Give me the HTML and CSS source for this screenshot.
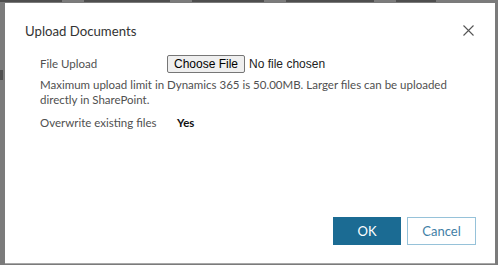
FILE: index.html
```html
<!DOCTYPE html>
<html lang="en">
<head>
    <meta charset="UTF-8">
    <title>Upload Documents</title>
    <link rel="stylesheet" href="styles.css">
</head>
<body>
    <div class="backdrop">
        <!-- page behind the modal, only the bottom of its nav shows -->
        <div class="page-strip">
            <i style="width: 62px"></i>
            <i style="width: 86px"></i>
            <i style="width: 72px"></i>
            <i style="width: 88px"></i>
            <i style="width: 40px"></i>
        </div>
        <i class="page-mark"></i>

        <div class="dialog">
            <div class="dialog-head">
                <h1>Upload Documents</h1>
                <button class="close-btn" aria-label="Close">
                    <svg width="11" height="11" viewBox="0 0 11 11">
                        <path d="M0.5 0.5 L10.5 10.5 M10.5 0.5 L0.5 10.5" stroke="#555" stroke-width="1.1" fill="none"/>
                    </svg>
                </button>
            </div>

            <div class="dialog-body">
                <div class="field">
                    <span class="label">File Upload</span>
                    <div class="file-picker">
                        <button class="choose-btn">Choose File</button>
                        <span class="file-name">No file chosen</span>
                    </div>
                </div>
                <p class="hint">Maximum upload limit in Dynamics 365 is 50.00MB. Larger files can be uploaded directly in SharePoint.</p>
                <div class="field">
                    <span class="label">Overwrite existing files</span>
                    <span class="value">Yes</span>
                </div>
            </div>

            <div class="dialog-foot">
                <button class="btn btn-primary">OK</button>
                <button class="btn btn-secondary">Cancel</button>
            </div>
        </div>
    </div>
</body>
</html>
```

FILE: styles.css
```css
body {
    margin: 0;
    font-family: Lato, "Open Sans", sans-serif;
    background: #7b7b7b;
}

.backdrop {
    width: 498px;
    height: 265px;
    overflow: hidden;
    position: relative;
    background: #7b7b7b;
}

.page-strip {
    position: absolute;
    top: 0;
    left: 0;
    display: flex;
    gap: 22px;
}

.page-strip i {
    height: 2px;
    background: #3c3c3c;
    opacity: 0.7;
}

.page-mark {
    position: absolute;
    top: 70px;
    left: 0;
    width: 3px;
    height: 10px;
    background: #333;
    opacity: 0.6;
}

.dialog {
    position: absolute;
    top: 3px;
    left: 5px;
    width: 490px;
    height: 260px;
    background: #fff;
    display: flex;
    flex-direction: column;
    box-shadow: 0 1px 0 #a8a8a8;
}

.dialog-head {
    display: flex;
    justify-content: space-between;
    align-items: flex-start;
    padding: 20px 21px 0 20px;
}

.dialog-head h1 {
    margin: 0;
    font-size: 13.2px;
    line-height: 16px;
    font-weight: 400;
    color: #333;
}

.close-btn {
    border: none;
    background: none;
    padding: 0;
    margin-top: 1px;
    width: 11px;
    height: 11px;
    cursor: pointer;
}

.dialog-body {
    flex: 1;
    padding: 15px 35px 0 35px;
    font-size: 11.5px;
    color: #505050;
}

.field {
    display: flex;
    align-items: center;
    min-height: 16px;
}

.label {
    width: 127px;
    flex-shrink: 0;
}

.file-picker {
    display: flex;
    align-items: center;
    gap: 4px;
    font-family: "Liberation Sans", Arial, sans-serif;
    font-size: 12px;
    color: #222;
}

.choose-btn {
    font: inherit;
    color: #000;
    padding: 0 6px;
    height: 18px;
    margin-top: 1px;
    background: #efefef;
    border: 1px solid #767676;
    border-radius: 2px;
}

.hint {
    margin: 4px 0 7px;
    line-height: 15px;
}

.value {
    font-weight: 700;
    color: #111;
    margin-left: 10px;
}

.dialog-foot {
    display: flex;
    justify-content: flex-end;
    gap: 6px;
    padding: 0 19px 18px 0;
}

.btn {
    width: 68px;
    height: 28px;
    font-family: Lato, sans-serif;
    font-size: 13px;
    cursor: pointer;
}

.btn-primary {
    background: #1b6b93;
    border: 1px solid #1b6b93;
    color: #fff;
}

.btn-secondary {
    width: 69px;
    background: #fff;
    border: 1px solid #96c2d9;
    color: #3f80a6;
}
```
